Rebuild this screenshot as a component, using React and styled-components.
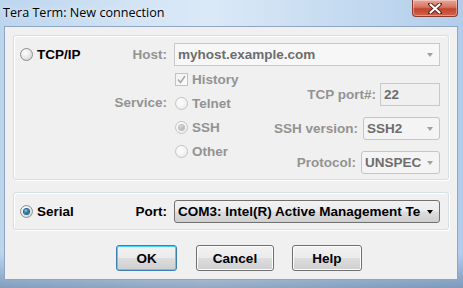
import React from 'react';
import styled, { createGlobalStyle, css } from 'styled-components';

const GlobalStyle = createGlobalStyle`
    html, body {
        margin: 0;
        padding: 0;
        background: #6f8fb5;
    }
    body {
        font-family: "Liberation Sans", Arial, sans-serif;
    }
`;

const Window = styled.div`
    width: 463px;
    height: 288px;
    display: flex;
    flex-direction: column;
    box-sizing: border-box;
    background:
        linear-gradient(180deg, rgba(255,255,255,0) 0%, rgba(255,255,255,0) 88%, rgba(60,90,130,0.45) 100%),
        linear-gradient(90deg, #bcd5ee 0%, #d3e4f5 30%, #dbe9f7 45%, #c4daf0 75%, #b2cdeb 100%);
`;

const TitleBar = styled.div`
    height: 26px;
    display: flex;
    align-items: flex-start;
    padding-left: 3px;
`;

const Title = styled.span`
    font-family: "Open Sans", "Liberation Sans", sans-serif;
    font-size: 12.6px;
    color: #000;
    line-height: 22px;
    margin-top: 2px;
    text-shadow: 0 0 6px rgba(255,255,255,0.9);
`;

const CloseButton = styled.div`
    margin-left: auto;
    margin-right: 5px;
    width: 46px;
    height: 17px;
    box-sizing: border-box;
    border: 1px solid #8c3a2e;
    border-top: none;
    border-radius: 0 0 4px 4px;
    background: linear-gradient(180deg, #e9a898 0%, #d7735f 45%, #c2452f 55%, #d1634b 100%);
    display: flex;
    align-items: center;
    justify-content: center;
    box-shadow: inset 0 0 0 1px rgba(255,255,255,0.35);
`;

const Client = styled.div`
    flex: 1;
    margin: 0 5px 8px 4px;
    background: #f0f0f0;
    border: 1px solid #8fa6c2;
    display: flex;
    flex-direction: column;
    padding: 8px 8px 0 8px;
`;

const Group = styled.div`
    border: 1px solid #d5dfe5;
    border-radius: 3px;
    box-shadow: 1px 1px 0 #fff, inset 1px 1px 0 #fff;
    padding: ${p => (p.$compact ? '7px 9px 6px 6px' : '7px 9px 5px 6px')};
    margin-bottom: ${p => (p.$compact ? '0' : '12px')};
`;

const FormGrid = styled.div`
    display: grid;
    grid-template-columns: 147px 266px;
    column-gap: 7px;
    row-gap: 1px;
`;

const LeadCell = styled.div`
    display: flex;
    align-items: center;
    justify-content: space-between;
    height: 23px;
`;

const textBase = css`
    font-size: 13.5px;
    font-weight: bold;
    white-space: nowrap;
`;

const Label = styled.span`
    ${textBase};
    color: ${p => (p.$disabled ? '#939393' : '#000')};
`;

const ServiceLabel = styled(Label)`
    text-align: right;
    line-height: 24px;
    padding-top: 24px;
`;

const LowerArea = styled.div`
    display: flex;
`;

const OptionColumn = styled.div`
    display: flex;
    flex-direction: column;
`;

const OptionRow = styled.label`
    display: flex;
    align-items: center;
    gap: 4px;
    height: 24px;
    padding-left: 1px;
`;

const FormColumn = styled.div`
    margin-left: auto;
    display: flex;
    flex-direction: column;
    align-items: flex-end;
    padding-top: 16px;
    gap: 11px;
`;

const FormRow = styled.div`
    display: flex;
    align-items: center;
    gap: ${p => p.$gap || 5}px;
`;

const RadioCircle = styled.span`
    width: 13px;
    height: 13px;
    box-sizing: border-box;
    border-radius: 50%;
    border: 1px solid ${p => (p.$disabled ? '#c4c4c4' : '#8e8f8f')};
    background: ${p => (p.$disabled
        ? 'radial-gradient(circle at 40% 35%, #ffffff 0%, #f4f4f4 50%, #e4e4e4 100%)'
        : 'radial-gradient(circle at 40% 35%, #ffffff 0%, #e6e6e6 55%, #c9c9c9 100%)')};
    display: flex;
    align-items: center;
    justify-content: center;
    flex-shrink: 0;

    &::after {
        content: '';
        display: ${p => (p.$checked ? 'block' : 'none')};
        width: 5px;
        height: 5px;
        border-radius: 50%;
        background: ${p => (p.$disabled
            ? 'radial-gradient(circle at 40% 35%, #d8d8d8 0%, #a3a3a3 100%)'
            : 'radial-gradient(circle at 40% 35%, #7fd6f2 0%, #1d7fa6 45%, #0b3f5c 100%)')};
        box-shadow: 0 0 0 1px ${p => (p.$disabled ? '#bdbdbd' : '#2a5f80')};
    }
`;

const CheckBox = styled.span`
    width: 13px;
    height: 13px;
    box-sizing: border-box;
    border: 1px solid #c2c2c2;
    background: linear-gradient(135deg, #f2f2f2, #fbfbfb);
    display: flex;
    align-items: center;
    justify-content: center;
    flex-shrink: 0;
`;

const Radio = ({ checked, disabled, children }) => (
    <OptionRow>
        <RadioCircle $checked={checked} $disabled={disabled} />
        <Label $disabled={disabled}>{children}</Label>
    </OptionRow>
);

const Check = ({ disabled, children }) => (
    <OptionRow>
        <CheckBox>
            <svg width="9" height="9" viewBox="0 0 9 9">
                <path d="M1 4.5 L3.5 7.5 L8 1" fill="none" stroke="#a5a5a5" strokeWidth="1.4" />
            </svg>
        </CheckBox>
        <Label $disabled={disabled}>{children}</Label>
    </OptionRow>
);

const LeadRadio = styled.div`
    display: flex;
    align-items: center;
    gap: 4px;
`;

const comboVariants = {
    edit: css`
        border: 1px solid #c9c9c9;
        border-radius: 0;
        background: #f7f7f7;
        color: #6d6d6d;
    `,
    list: css`
        border: 1px solid #c5c5c5;
        border-radius: 3px;
        background: #f4f4f4;
        color: #6d6d6d;
    `,
    active: css`
        border: 1px solid #707070;
        border-radius: 3px;
        background: linear-gradient(180deg, #f2f2f2 0%, #ebebeb 48%, #dddddd 52%, #cfcfcf 100%);
        color: #000;
    `,
};

const Combo = styled.div`
    width: ${p => p.$width}px;
    height: 23px;
    box-sizing: border-box;
    display: flex;
    align-items: center;
    padding: 0 4px 0 3px;
    ${p => comboVariants[p.$variant]};
`;

const ComboText = styled.span`
    ${textBase};
    flex: 1;
    color: inherit;
`;

const Arrow = styled.span`
    width: 0;
    height: 0;
    margin: 1px 2px 0 4px;
    border-left: 3.5px solid transparent;
    border-right: 3.5px solid transparent;
    border-top: 4px solid ${p => (p.$active ? '#000' : '#a0a0a0')};
    flex-shrink: 0;
`;

const TextBox = styled.div`
    width: ${p => p.$width}px;
    height: 23px;
    box-sizing: border-box;
    border: 1px solid #c9c9c9;
    background: #f0f0f0;
    display: flex;
    align-items: center;
    padding-left: 3px;
    color: #6d6d6d;
    ${textBase};
`;

const ButtonRow = styled.div`
    display: flex;
    justify-content: center;
    gap: 19px;
    padding-left: 16px;
    margin-top: 15px;
`;

const Button = styled.div`
    width: ${p => p.$width}px;
    height: 26px;
    box-sizing: border-box;
    border: 1px solid ${p => (p.$default ? '#3c7fb1' : '#707070')};
    border-radius: 3px;
    background: linear-gradient(180deg, #f2f2f2 0%, #ebebeb 48%, #dddddd 52%, #cfcfcf 100%);
    box-shadow: inset 0 0 0 1px ${p => (p.$default ? '#48d2f8' : '#fcfcfc')};
    display: flex;
    align-items: center;
    justify-content: center;
    ${textBase};
    color: #000;
    &:nth-child(3) {
        margin-left: -1px;
    }
`;

export default function App() {
    return (
        <Window>
            <GlobalStyle />
            <TitleBar>
                <Title>Tera Term: New connection</Title>
                <CloseButton>
                    <svg width="14" height="11" viewBox="0 0 14 11">
                        <path d="M2 1 L12 10 M12 1 L2 10" stroke="#5b2219" strokeWidth="4" strokeLinecap="round" />
                        <path d="M2.5 1.5 L11.5 9.5 M11.5 1.5 L2.5 9.5" stroke="#ffffff" strokeWidth="2.2" strokeLinecap="round" />
                    </svg>
                </CloseButton>
            </TitleBar>
            <Client>
                <Group>
                    <FormGrid>
                        <LeadCell>
                            <LeadRadio>
                                <RadioCircle />
                                <Label>TCP/IP</Label>
                            </LeadRadio>
                            <Label $disabled>Host:</Label>
                        </LeadCell>
                        <Combo $variant="edit" $width={266}>
                            <ComboText>myhost.example.com</ComboText>
                            <Arrow />
                        </Combo>
                        <ServiceLabel $disabled>Service:</ServiceLabel>
                        <LowerArea>
                            <OptionColumn>
                                <Check disabled>History</Check>
                                <Radio disabled>Telnet</Radio>
                                <Radio disabled checked>SSH</Radio>
                                <Radio disabled>Other</Radio>
                            </OptionColumn>
                            <FormColumn>
                                <FormRow $gap={4}>
                                    <Label $disabled>TCP port#:</Label>
                                    <TextBox $width={60}>22</TextBox>
                                </FormRow>
                                <FormRow>
                                    <Label $disabled>SSH version:</Label>
                                    <Combo $variant="list" $width={77}>
                                        <ComboText>SSH2</ComboText>
                                        <Arrow />
                                    </Combo>
                                </FormRow>
                                <FormRow>
                                    <Label $disabled>Protocol:</Label>
                                    <Combo $variant="list" $width={79}>
                                        <ComboText>UNSPEC</ComboText>
                                        <Arrow />
                                    </Combo>
                                </FormRow>
                            </FormColumn>
                        </LowerArea>
                    </FormGrid>
                </Group>
                <Group $compact>
                    <FormGrid>
                        <LeadCell>
                            <LeadRadio>
                                <RadioCircle $checked />
                                <Label>Serial</Label>
                            </LeadRadio>
                            <Label>Port:</Label>
                        </LeadCell>
                        <Combo $variant="active" $width={266}>
                            <ComboText>COM3: Intel(R) Active Management Te</ComboText>
                            <Arrow $active />
                        </Combo>
                    </FormGrid>
                </Group>
                <ButtonRow>
                    <Button $default $width={61}>OK</Button>
                    <Button $width={78}>Cancel</Button>
                    <Button $width={70}>Help</Button>
                </ButtonRow>
            </Client>
        </Window>
    );
}
